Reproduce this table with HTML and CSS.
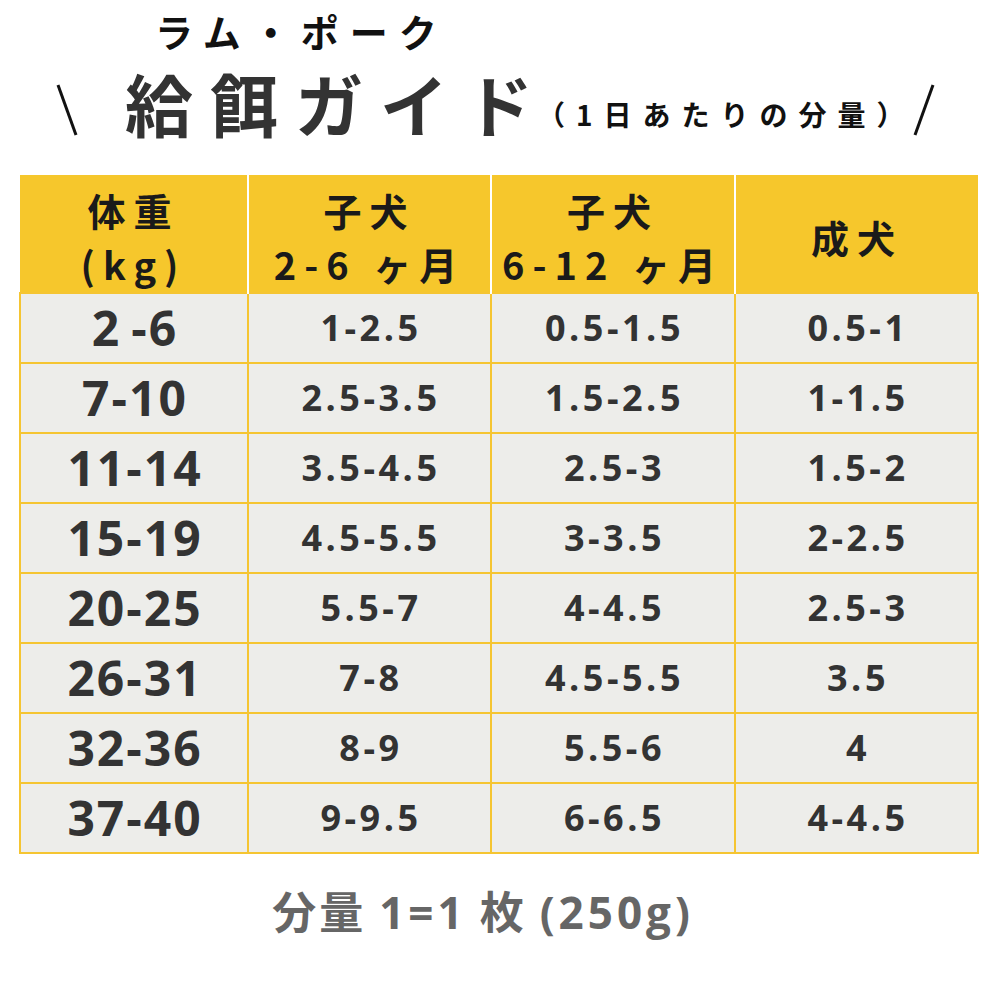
FILE: index.html
```html
<!DOCTYPE html>
<html lang="ja">
<head>
<meta charset="utf-8">
<link rel="stylesheet" href="styles.css">
</head>
<body>
<div class="page">
  <div class="kicker">ラム・ポーク</div>
  <div class="headline">
    <svg class="slash back" width="24" height="54" viewBox="0 0 24 54"><line x1="3" y1="2" x2="21" y2="52" stroke="#111" stroke-width="3"/></svg>
    <span class="big">給餌ガイド</span>
    <span class="sub">（1日あたりの分量）</span>
    <svg class="slash fwd" width="24" height="54" viewBox="0 0 24 54"><line x1="21" y1="2" x2="3" y2="52" stroke="#111" stroke-width="3"/></svg>
  </div>
  <table class="guide">
    <colgroup>
      <col class="c1"><col class="c2"><col class="c3"><col class="c4">
    </colgroup>
    <thead>
      <tr>
        <th>体重<br>(kg)</th>
        <th>子犬<br>2-6 ヶ月</th>
        <th>子犬<br>6-12 ヶ月</th>
        <th>成犬</th>
      </tr>
    </thead>
    <tbody>
      <tr><td class="w">2&thinsp;-6</td><td>1-2.5</td><td>0.5-1.5</td><td>0.5-1</td></tr>
      <tr><td class="w">7-10</td><td>2.5-3.5</td><td>1.5-2.5</td><td>1-1.5</td></tr>
      <tr><td class="w">11-14</td><td>3.5-4.5</td><td>2.5-3</td><td>1.5-2</td></tr>
      <tr><td class="w">15-19</td><td>4.5-5.5</td><td>3-3.5</td><td>2-2.5</td></tr>
      <tr><td class="w">20-25</td><td>5.5-7</td><td>4-4.5</td><td>2.5-3</td></tr>
      <tr><td class="w">26-31</td><td>7-8</td><td>4.5-5.5</td><td>3.5</td></tr>
      <tr><td class="w">32-36</td><td>8-9</td><td>5.5-6</td><td>4</td></tr>
      <tr><td class="w">37-40</td><td>9-9.5</td><td>6-6.5</td><td>4-4.5</td></tr>
    </tbody>
  </table>
  <div class="note">分量 <span class="num">1=1</span> 枚 <span class="num">(250g)</span></div>
</div>
</body>
</html>
```
FILE: styles.css
```css
html, body {
  margin: 0;
  padding: 0;
  background: #fff;
}
.page {
  width: 1000px;
  height: 1000px;
  padding: 0 23px 0 19px;
  box-sizing: border-box;
  font-family: "Noto Sans CJK JP", "Noto Sans", sans-serif;
}
.kicker {
  margin-left: 136px;
  padding-top: 6px;
  font-size: 38px;
  font-weight: 700;
  letter-spacing: 11px;
  line-height: 50px;
  color: #111;
}
.headline {
  display: flex;
  align-items: flex-end;
  height: 90px;
  margin-top: 0;
}
.slash {
  display: block;
  margin-bottom: 9px;
}
.back {
  margin-left: 36px;
}
.big {
  margin-left: 46px;
  font-size: 68px;
  font-weight: 700;
  letter-spacing: 17px;
  line-height: 86px;
  color: #333;
}
.sub {
  margin-left: -13px;
  margin-bottom: 13px;
  font-size: 28px;
  font-weight: 700;
  letter-spacing: 11px;
  line-height: 38px;
  color: #111;
}
.fwd {
  margin-left: -4px;
}
.guide {
  margin-top: 29px;
  width: 958px;
  border-collapse: collapse;
  table-layout: fixed;
}
.c1 { width: 228px; }
.c2 { width: 243px; }
.c3 { width: 244px; }
.c4 { width: 243px; }
.guide th {
  height: 118px;
  box-sizing: border-box;
  padding: 6px 0 0;
  background: #f6c72c;
  border: 2px solid #fff;
  border-top: 0;
  border-bottom: 0;
  font-size: 38px;
  font-weight: 700;
  line-height: 54px;
  letter-spacing: 8px;
  color: #1a1a1a;
  text-align: center;
  vertical-align: middle;
}
.guide th:first-child { border-left: 0; }
.guide th:last-child { border-right: 0; }
.guide td {
  height: 70px;
  box-sizing: border-box;
  padding: 0 0 0 3px;
  background: #ededea;
  border: 2px solid #f5c532;
  font-family: "Open Sans", "Noto Sans", sans-serif;
  font-size: 36px;
  font-weight: 700;
  letter-spacing: 3.5px;
  color: #333;
  text-align: center;
  vertical-align: middle;
  line-height: 1;
}
.guide td.w {
  font-size: 48px;
  letter-spacing: 2px;
  padding-left: 2px;
}
.note {
  margin-top: 28px;
  text-align: center;
  padding-right: 30px;
  font-size: 44px;
  font-weight: 700;
  letter-spacing: 3px;
  color: #666;
  line-height: 56px;
}
.note .num {
  font-family: "Open Sans", "Noto Sans", sans-serif;
  letter-spacing: 4px;
}
```
